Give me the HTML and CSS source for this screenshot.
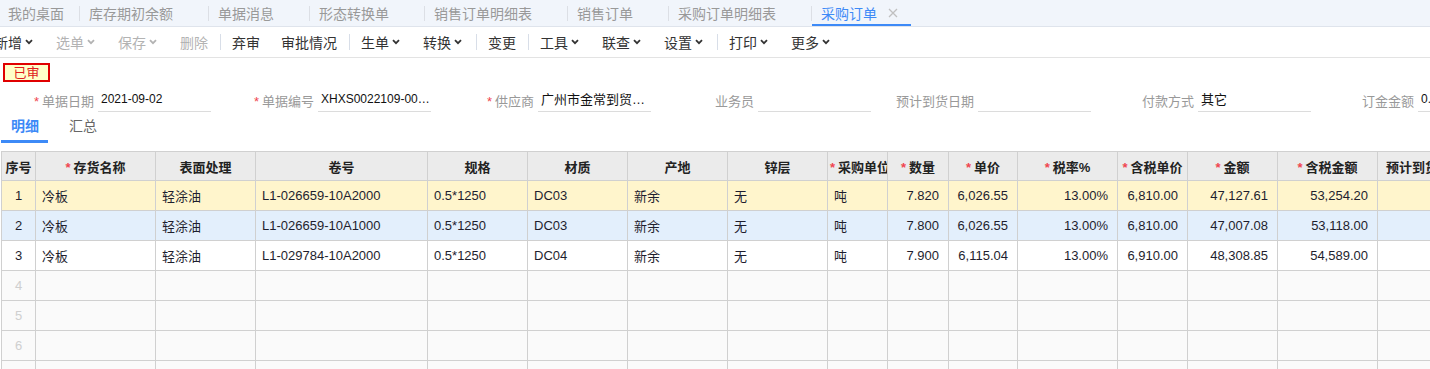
FILE: index.html
```html
<!DOCTYPE html>
<html lang="zh">
<head>
    <meta charset="UTF-8">
    <meta name="viewport" content="width=device-width, initial-scale=1.0">
    <title>采购订单</title>
    <link rel="stylesheet" href="styles.css">
</head>
<body>
    <!-- 页签栏 -->
    <div class="tabbar">
        <div class="tab first">我的桌面</div>
        <span class="tab-sep"></span>
        <div class="tab">库存期初余额</div>
        <span class="tab-sep"></span>
        <div class="tab">单据消息</div>
        <span class="tab-sep"></span>
        <div class="tab">形态转换单</div>
        <span class="tab-sep"></span>
        <div class="tab">销售订单明细表</div>
        <span class="tab-sep"></span>
        <div class="tab">销售订单</div>
        <span class="tab-sep"></span>
        <div class="tab">采购订单明细表</div>
        <span class="tab-sep"></span>
        <div class="tab active">采购订单
            <svg class="tab-close" width="10" height="10" viewBox="0 0 10 10"><path d="M1 1l8 8M9 1l-8 8" stroke="currentColor" stroke-width="1.3" fill="none"/></svg>
        </div>
    </div>

    <!-- 工具栏 -->
    <div class="toolbar">
        <div class="tool-list">
            <span class="tool">新增<svg class="caret" width="8" height="6" viewBox="0 0 8 6"><path d="M1 1.2l3 3 3-3" fill="none" stroke="currentColor" stroke-width="1.8"/></svg></span>
            <span class="tool disabled">选单<svg class="caret" width="8" height="6" viewBox="0 0 8 6"><path d="M1 1.2l3 3 3-3" fill="none" stroke="currentColor" stroke-width="1.8"/></svg></span>
            <span class="tool disabled">保存<svg class="caret" width="8" height="6" viewBox="0 0 8 6"><path d="M1 1.2l3 3 3-3" fill="none" stroke="currentColor" stroke-width="1.8"/></svg></span>
            <span class="tool disabled">删除</span>
            <span class="tool-sep"></span>
            <span class="tool">弃审</span>
            <span class="tool">审批情况</span>
            <span class="tool-sep"></span>
            <span class="tool">生单<svg class="caret" width="8" height="6" viewBox="0 0 8 6"><path d="M1 1.2l3 3 3-3" fill="none" stroke="currentColor" stroke-width="1.8"/></svg></span>
            <span class="tool">转换<svg class="caret" width="8" height="6" viewBox="0 0 8 6"><path d="M1 1.2l3 3 3-3" fill="none" stroke="currentColor" stroke-width="1.8"/></svg></span>
            <span class="tool-sep"></span>
            <span class="tool">变更</span>
            <span class="tool-sep"></span>
            <span class="tool">工具<svg class="caret" width="8" height="6" viewBox="0 0 8 6"><path d="M1 1.2l3 3 3-3" fill="none" stroke="currentColor" stroke-width="1.8"/></svg></span>
            <span class="tool">联查<svg class="caret" width="8" height="6" viewBox="0 0 8 6"><path d="M1 1.2l3 3 3-3" fill="none" stroke="currentColor" stroke-width="1.8"/></svg></span>
            <span class="tool">设置<svg class="caret" width="8" height="6" viewBox="0 0 8 6"><path d="M1 1.2l3 3 3-3" fill="none" stroke="currentColor" stroke-width="1.8"/></svg></span>
            <span class="tool-sep"></span>
            <span class="tool">打印<svg class="caret" width="8" height="6" viewBox="0 0 8 6"><path d="M1 1.2l3 3 3-3" fill="none" stroke="currentColor" stroke-width="1.8"/></svg></span>
            <span class="tool">更多<svg class="caret" width="8" height="6" viewBox="0 0 8 6"><path d="M1 1.2l3 3 3-3" fill="none" stroke="currentColor" stroke-width="1.8"/></svg></span>
        </div>
    </div>

    <div class="status-row">
        <span class="status-badge">已审</span>
    </div>

    <!-- 表头字段 -->
    <div class="form-row">
        <div class="field">
            <label><i class="req">*</i>单据日期</label>
            <div class="field-input latin">2021-09-02</div>
        </div>
        <div class="field">
            <label><i class="req">*</i>单据编号</label>
            <div class="field-input latin">XHXS0022109-0003</div>
        </div>
        <div class="field">
            <label><i class="req">*</i>供应商</label>
            <div class="field-input">广州市金常到贸易有限公司</div>
        </div>
        <div class="field">
            <label>业务员</label>
            <div class="field-input"></div>
        </div>
        <div class="field">
            <label>预计到货日期</label>
            <div class="field-input"></div>
        </div>
        <div class="field">
            <label>付款方式</label>
            <div class="field-input">其它</div>
        </div>
        <div class="field">
            <label>订金金额</label>
            <div class="field-input latin">0.00</div>
        </div>
    </div>

    <div class="subtabs">
        <span class="subtab active">明细</span>
        <span class="subtab">汇总</span>
    </div>

    <!-- 明细表格 -->
    <div class="grid-wrap">
        <table class="grid">
            <colgroup>
                <col style="width:34px"><col style="width:120px"><col style="width:100px"><col style="width:172px">
                <col style="width:100px"><col style="width:100px"><col style="width:100px"><col style="width:100px">
                <col style="width:60px"><col style="width:61px"><col style="width:69px"><col style="width:100px">
                <col style="width:70px"><col style="width:90px"><col style="width:100px"><col style="width:110px">
                <col style="width:100px">
            </colgroup>
            <thead>
                <tr>
                    <th>序号</th>
                    <th><i class="req">*</i>存货名称</th>
                    <th>表面处理</th>
                    <th>卷号</th>
                    <th>规格</th>
                    <th>材质</th>
                    <th>产地</th>
                    <th>锌层</th>
                    <th><i class="req">*</i>采购单位</th>
                    <th><i class="req">*</i>数量</th>
                    <th><i class="req">*</i>单价</th>
                    <th><i class="req">*</i>税率%</th>
                    <th><i class="req">*</i>含税单价</th>
                    <th><i class="req">*</i>金额</th>
                    <th><i class="req">*</i>含税金额</th>
                    <th class="left">预计到货日期</th>
                    <th>备注</th>
                </tr>
            </thead>
            <tbody>
                <tr class="row-current">
                    <td class="idx">1</td><td>冷板</td><td>轻涂油</td><td>L1-026659-10A2000</td>
                    <td>0.5*1250</td><td>DC03</td><td>新余</td><td>无</td><td>吨</td>
                    <td class="num">7.820</td><td class="num">6,026.55</td><td class="num">13.00%</td>
                    <td class="num">6,810.00</td><td class="num">47,127.61</td><td class="num">53,254.20</td><td></td><td></td>
                </tr>
                <tr class="row-hover">
                    <td class="idx">2</td><td>冷板</td><td>轻涂油</td><td>L1-026659-10A1000</td>
                    <td>0.5*1250</td><td>DC03</td><td>新余</td><td>无</td><td>吨</td>
                    <td class="num">7.800</td><td class="num">6,026.55</td><td class="num">13.00%</td>
                    <td class="num">6,810.00</td><td class="num">47,007.08</td><td class="num">53,118.00</td><td></td><td></td>
                </tr>
                <tr>
                    <td class="idx">3</td><td>冷板</td><td>轻涂油</td><td>L1-029784-10A2000</td>
                    <td>0.5*1250</td><td>DC04</td><td>新余</td><td>无</td><td>吨</td>
                    <td class="num">7.900</td><td class="num">6,115.04</td><td class="num">13.00%</td>
                    <td class="num">6,910.00</td><td class="num">48,308.85</td><td class="num">54,589.00</td><td></td><td></td>
                </tr>
                <tr class="empty"><td class="idx">4</td><td></td><td></td><td></td><td></td><td></td><td></td><td></td><td></td><td></td><td></td><td></td><td></td><td></td><td></td><td></td><td></td></tr>
                <tr class="empty"><td class="idx">5</td><td></td><td></td><td></td><td></td><td></td><td></td><td></td><td></td><td></td><td></td><td></td><td></td><td></td><td></td><td></td><td></td></tr>
                <tr class="empty"><td class="idx">6</td><td></td><td></td><td></td><td></td><td></td><td></td><td></td><td></td><td></td><td></td><td></td><td></td><td></td><td></td><td></td><td></td></tr>
                <tr class="empty"><td class="idx">7</td><td></td><td></td><td></td><td></td><td></td><td></td><td></td><td></td><td></td><td></td><td></td><td></td><td></td><td></td><td></td><td></td></tr>
            </tbody>
        </table>
    </div>
</body>
</html>
```

FILE: styles.css
```css
:root {
    --primary-color: #3d8af7;
    --text-color: #333;
    --muted-color: #999;
    --disabled-color: #b3b3b3;
    --border-color: #d0d0d0;
    --required-color: #f0454f;
}

* {
    margin: 0;
    padding: 0;
    box-sizing: border-box;
}

html, body {
    overflow: hidden;
}

body {
    font-family: 'Liberation Sans', 'Noto Sans CJK SC', sans-serif;
    font-size: 13px;
    color: var(--text-color);
    background: #fff;
    width: 1430px;
}

i.req {
    font-style: normal;
    color: var(--required-color);
    margin-right: 3px;
}

/* 页签栏 */
.tabbar {
    display: flex;
    align-items: center;
    height: 27px;
    background: #f1f5fb;
    border-bottom: 1px solid #dfe4ec;
    font-size: 14px;
    color: var(--muted-color);
    white-space: nowrap;
}

.tab {
    display: flex;
    align-items: center;
    height: 26px;
    padding: 0 35px 0 9px;
}

.tab.first {
    padding: 0 15px 0 8px;
}

.tab.active {
    color: var(--primary-color);
    padding: 2px 13px 0 9px;
    border-bottom: 2px solid var(--primary-color);
}

.tab-close {
    margin-left: 11px;
    color: #c0c0c0;
}

.tab-sep {
    width: 1px;
    height: 15px;
    background: #dcdfe5;
}

/* 工具栏 */
.toolbar {
    height: 31px;
    border-bottom: 1px solid #e3e3e3;
    font-size: 14px;
    overflow: hidden;
}

.tool-list {
    display: flex;
    align-items: center;
    height: 30px;
    margin-left: -16px;
    white-space: nowrap;
}

.tool {
    display: flex;
    align-items: center;
    padding: 0 11px 0 10px;
    color: #333;
}

.tool.disabled {
    color: var(--disabled-color);
}

.caret {
    margin: 0 2px 0 3px;
}

.tool-sep {
    width: 1px;
    height: 16px;
    margin: 0 1px;
    background: #d8dee8;
}

/* 状态 */
.status-row {
    display: flex;
    height: 24px;
    padding: 5px 0 0 3px;
}

.status-badge {
    width: 47px;
    height: 19px;
    line-height: 15px;
    text-align: center;
    color: #e02020;
    background: #ffffc8;
    border: 2px solid #e00000;
}

/* 表头字段 */
.form-row {
    display: flex;
    margin-top: 6px;
    white-space: nowrap;
}

.field {
    display: flex;
    align-items: center;
    width: 220px;
    flex-shrink: 0;
}

.field label {
    width: 94px;
    text-align: right;
    color: var(--muted-color);
    flex-shrink: 0;
}

.field-input {
    width: 113px;
    height: 24px;
    line-height: 23px;
    margin-left: 4px;
    padding: 0 0 0 3px;
    color: #111;
    border-bottom: 1px solid #dcdcdc;
    overflow: hidden;
    text-overflow: ellipsis;
}

.field-input.latin {
    font-size: 12px;
}

/* 明细/汇总 */
.subtabs {
    display: flex;
    gap: 11px;
    margin-top: 1px;
    padding-left: 1px;
    font-size: 14px;
}

.subtab {
    padding: 0 9px 0 10px;
    height: 30px;
    line-height: 27px;
    color: #666;
    border-bottom: 3px solid transparent;
}

.subtab.active {
    color: var(--primary-color);
    font-weight: 700;
    border-bottom-color: var(--primary-color);
}

/* 明细表格 */
.grid-wrap {
    margin-top: 8px;
    padding-left: 1px;
}

.grid {
    border-collapse: collapse;
    table-layout: fixed;
    width: 1516px;
}

.grid th,
.grid td {
    border: 1px solid var(--border-color);
    padding: 0 6px;
    white-space: nowrap;
    overflow: hidden;
}

.grid th {
    height: 29px;
    padding: 0 2px;
    background: #ebebeb;
    font-weight: 700;
    text-align: center;
    color: #222;
}

.grid th.left {
    text-align: left;
    padding-left: 8px;
}

.grid td {
    height: 30px;
    color: #1e1e2e;
}

.grid td.num {
    text-align: right;
    padding-right: 9px;
}

.grid td.idx {
    text-align: center;
    padding: 0;
}

.grid tr.row-current td {
    background: #fff5cc;
}

.grid tr.row-hover td {
    background: #e3effc;
}

.grid tr.empty td {
    background: #fafafa;
}

.grid tr.empty td.idx {
    color: #cfcfcf;
}
```
